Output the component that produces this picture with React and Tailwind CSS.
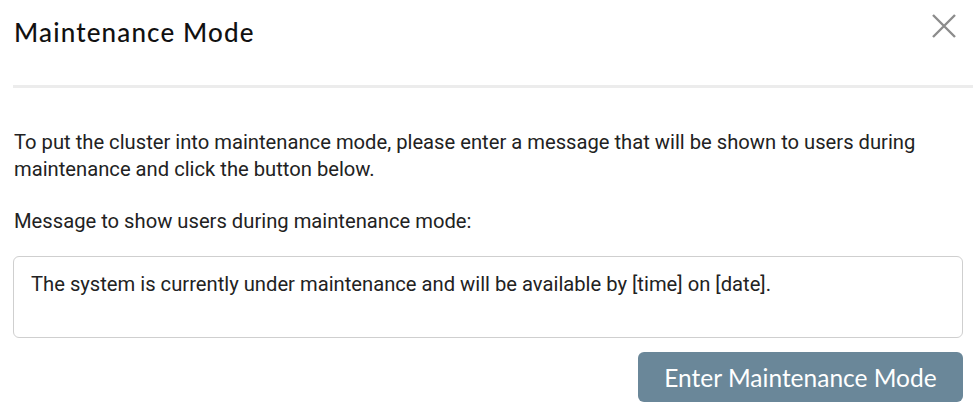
export default function App() {
  return (
    <div className="w-[973px] h-[411px] bg-white overflow-hidden font-['Roboto',sans-serif] text-[#222]">
      {/* Header */}
      <div className="flex items-center justify-between pl-[14px] pr-[17px] h-[64px]">
        <h1 className="font-['Lato',sans-serif] text-[26px] font-medium text-[#111] tracking-[1.15px]">Maintenance Mode</h1>
        <svg width="24" height="24" viewBox="0 0 24 24" className="-mt-[12px]">
          <path d="M1 1L23 23M23 1L1 23" stroke="#8c8c8c" strokeWidth="2.4" fill="none" />
        </svg>
      </div>
      <div className="ml-[13px] mt-[21px] h-[3px] bg-[#ececec]" />

      {/* Body */}
      <div className="pl-[14px] pr-[10px] pt-[41px] text-[20.2px] leading-[27px]">
        <p>
          To put the cluster into maintenance mode, please enter a message that will be shown to users during
          maintenance and click the button below.
        </p>
        <p className="mt-[25px]">Message to show users during maintenance mode:</p>
        <div className="mt-[21px] w-[950px] h-[82px] rounded-[6px] border border-[#cfcfcf] pl-[17px] pt-[14px] -ml-px">
          The system is currently under maintenance and will be available by [time] on [date].
        </div>
        <div className="flex justify-end mt-[14px]">
          <button className="w-[325px] h-[50px] rounded-[6px] bg-[#6a8799] text-white font-['Lato',sans-serif] text-[24.5px]">
            Enter Maintenance Mode
          </button>
        </div>
      </div>
    </div>
  )
}
